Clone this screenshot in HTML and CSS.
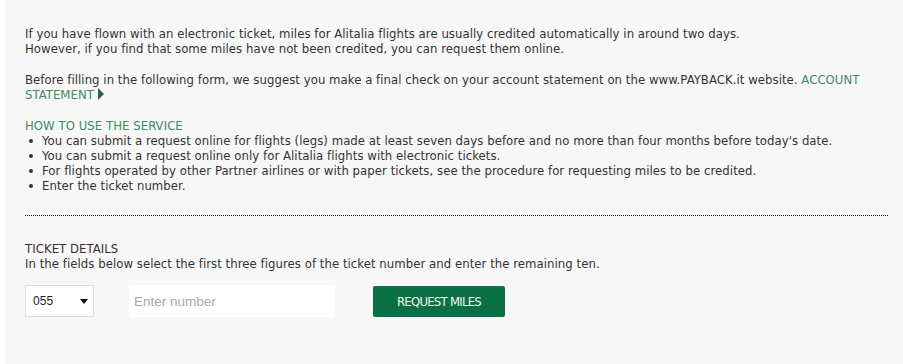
FILE: index.html
```html
<!DOCTYPE html>
<html lang="en">
<head>
<meta charset="utf-8">
<title>Request miles</title>
<link rel="stylesheet" href="styles.css">
</head>
<body>
<main class="page">
  <p class="para">If you have flown with an electronic ticket, miles for Alitalia flights are usually credited automatically in around two days.<br>However, if you find that some miles have not been credited, you can request them online.</p>
  <p class="para">Before filling in the following form, we suggest you make a final check on your account statement on the www.PAYBACK.it website. <a class="link" href="#">ACCOUNT</a><br><a class="link" href="#">STATEMENT</a><span class="tri"></span></p>
  <div class="howto">
    <h2 class="green-title">HOW TO USE THE SERVICE</h2>
    <ul class="bullets">
      <li>You can submit a request online for flights (legs) made at least seven days before and no more than four months before today's date.</li>
      <li>You can submit a request online only for Alitalia flights with electronic tickets.</li>
      <li>For flights operated by other Partner airlines or with paper tickets, see the procedure for requesting miles to be credited.</li>
      <li>Enter the ticket number.</li>
    </ul>
  </div>
  <hr class="dots">
  <section class="ticket">
    <h3 class="ticket-title">TICKET DETAILS</h3>
    <p class="ticket-help">In the fields below select the first three figures of the ticket number and enter the remaining ten.</p>
    <form class="ticket-form" onsubmit="return false">
      <div class="select">
        <span class="select-val">055</span>
        <svg class="select-arrow" width="8" height="5" viewBox="0 0 8 5"><path d="M0 0H8L4 5Z" fill="#111"/></svg>
      </div>
      <input class="num" type="text" placeholder="Enter number">
      <button class="btn" type="submit">REQUEST MILES</button>
    </form>
  </section>
</main>
</body>
</html>
```
FILE: styles.css
```css
html, body { margin: 0; padding: 0; background: #fff; }
body { height: 364px; overflow: hidden; }
.page {
  margin-left: 5px;
  min-height: 364px;
  background: #f7f7f7;
  padding: 26px 15px 0 20px;
  box-sizing: border-box;
  font-family: "DejaVu Sans Condensed", "DejaVu Sans", sans-serif;
  font-size: 13px;
  letter-spacing: 0.05px;
  line-height: 15px;
  color: #333;
}
.para { margin: 0 0 16px; }
.link { color: #3d8a5d; text-decoration: none; }
.tri {
  display: inline-block;
  width: 0; height: 0;
  border-left: 6px solid #1d6b42;
  border-top: 6px solid transparent;
  border-bottom: 6px solid transparent;
  margin-left: 4px;
  vertical-align: -1px;
}
.green-title { margin: 0; font-size: 13px; font-weight: normal; color: #3d8a5d; }
.bullets { margin: 0; padding: 0; list-style: none; }
.bullets li { position: relative; padding-left: 17px; }
.bullets li::before {
  content: "";
  position: absolute;
  left: 4px; top: 6px;
  width: 4px; height: 4px;
  border-radius: 50%;
  background: #333;
}
.dots {
  margin: 22px 0 0;
  border: 0;
  border-top: 1px dotted #111;
  height: 0;
}
.ticket { padding-top: 25px; }
.ticket-title { margin: 0; font-size: 13px; font-weight: normal; color: #3a2f2f; line-height: 15px; }
.ticket-help { margin: 0; }
.ticket-form { display: flex; align-items: flex-start; margin-top: 14px; }
.select {
  width: 69px; height: 32px;
  box-sizing: border-box;
  border: 1px solid #dedede;
  background: #fff;
  display: flex; align-items: center; justify-content: space-between;
  padding: 0 5px 0 7px;
  font-family: "Liberation Sans", Arial, sans-serif;
  font-size: 12px;
  color: #222;
}
.select-arrow { display: block; }
.num {
  margin-left: 35px;
  width: 206px; height: 32px;
  box-sizing: border-box;
  border: 0;
  background: #fff;
  padding: 0 5px;
  font-family: "Liberation Sans", Arial, sans-serif;
  font-size: 13.5px;
  color: #333;
  outline: none;
}
.num::placeholder { color: #a9a9a9; }
.btn {
  margin-left: 38px;
  margin-top: 1px;
  width: 132px; height: 31px;
  border: 0;
  border-radius: 2px;
  background: #0b6f45;
  color: #eef8ef;
  font-family: "DejaVu Sans Condensed", sans-serif;
  font-size: 13px;
  letter-spacing: -0.75px;
  padding: 0 0 1px;
  cursor: pointer;
}
```
